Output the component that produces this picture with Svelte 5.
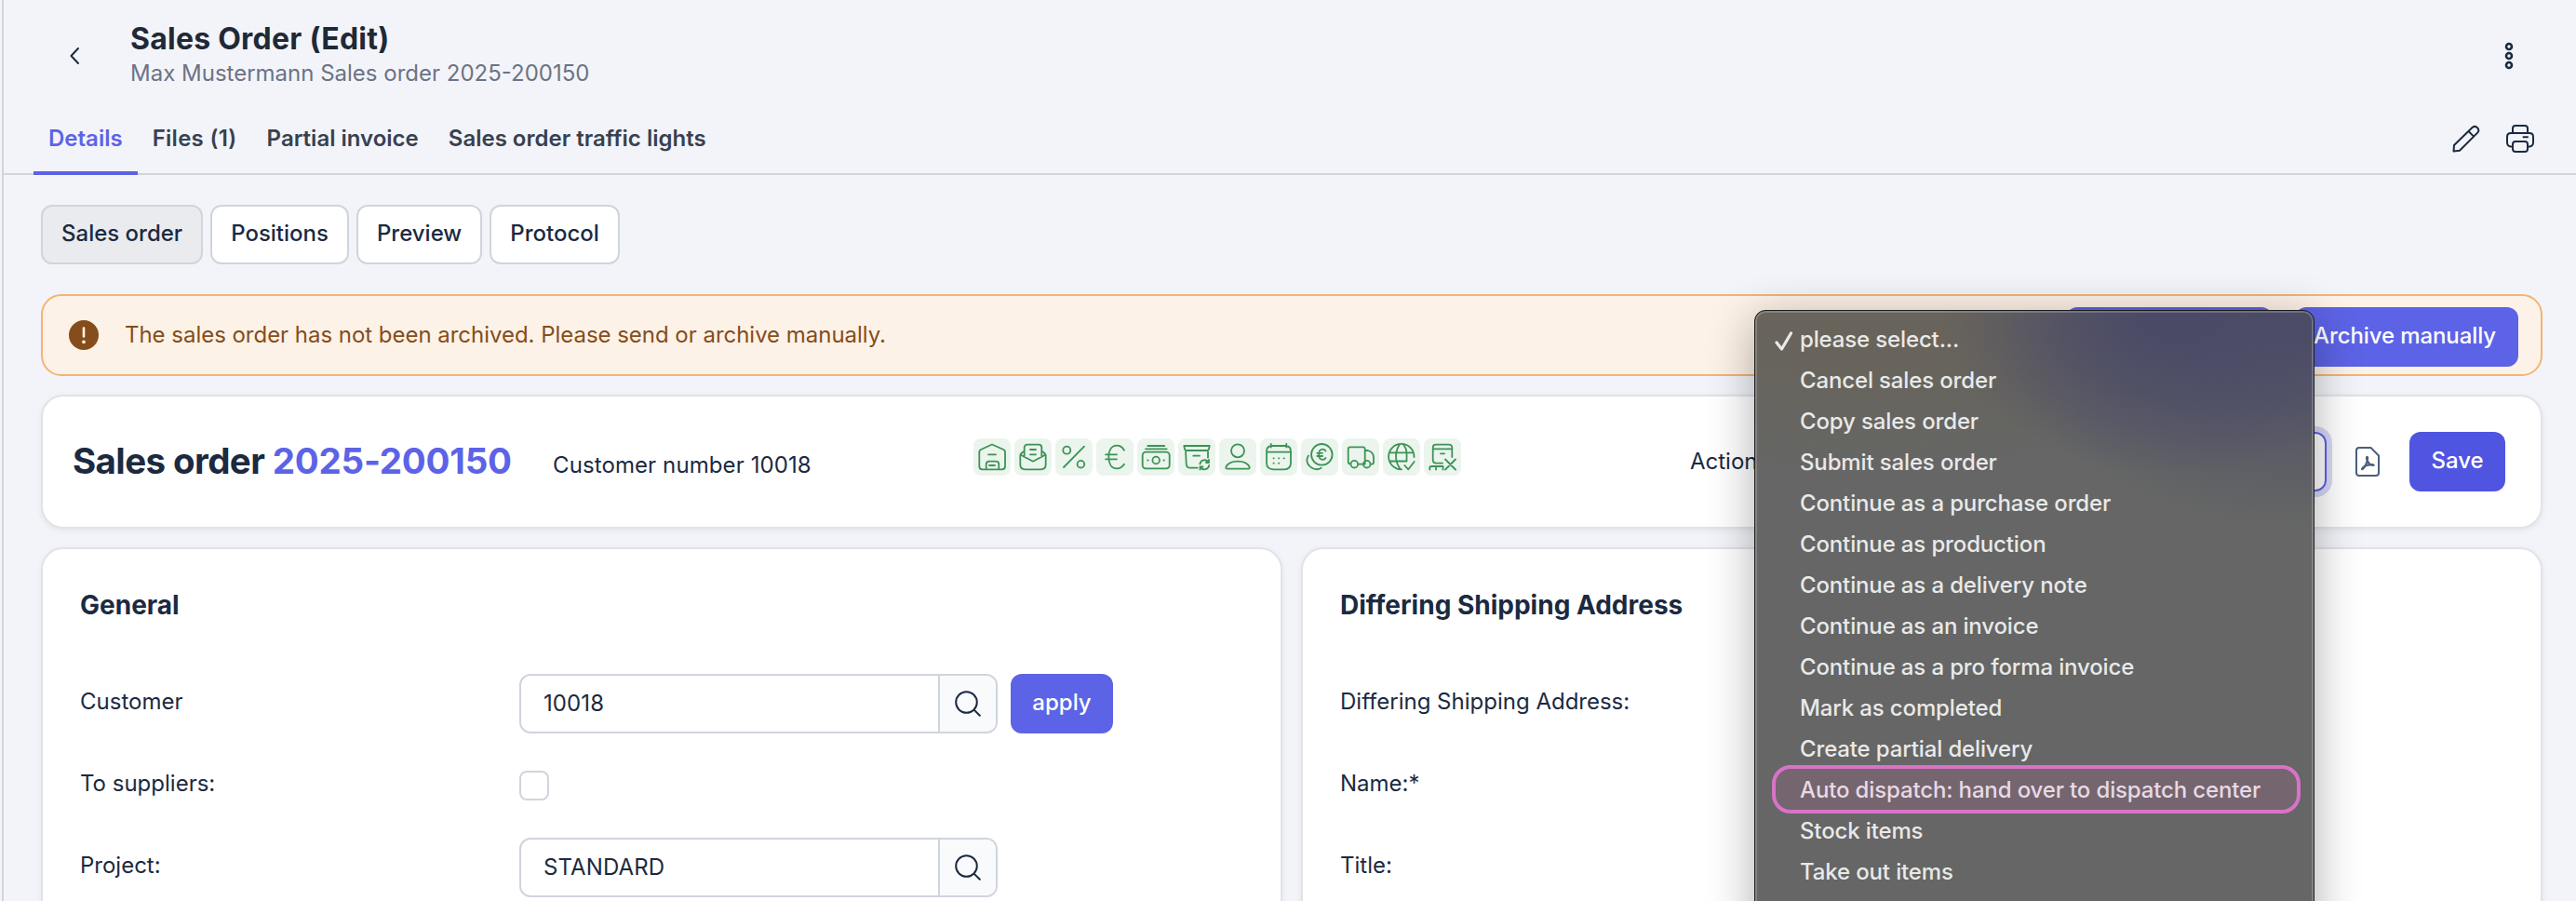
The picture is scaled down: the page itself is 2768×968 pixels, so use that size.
<script lang="ts">
  const tabs = ["Details", "Files (1)", "Partial invoice", "Sales order traffic lights"];
  const views = ["Sales order", "Positions", "Preview", "Protocol"];
  const actions = [
    "please select...",
    "Cancel sales order",
    "Copy sales order",
    "Submit sales order",
    "Continue as a purchase order",
    "Continue as production",
    "Continue as a delivery note",
    "Continue as an invoice",
    "Continue as a pro forma invoice",
    "Mark as completed",
    "Create partial delivery",
    "Auto dispatch: hand over to dispatch center",
    "Stock items",
    "Take out items",
  ];

  // status icons, drawn on a 40x40 grid
  const statusIcons = [
    // warehouse
    "M20 6.5 8 12q-1.7 .8-1.7 2.500V30q0 3.300 3.300 3.300H30.700q3.300 0 3.300-3.300V14.500q0-1.700-1.700-2.500ZM16 17.300h8M13.700 33V28q0-3.300 3.300-3.300h7q3.300 0 3.300 3.300v5M17 29h6",
    // open letter
    "M10.700 20V10q0-3.300 3.300-3.300H26q3.300 0 3.300 3.300V20M10.700 13.500 7.500 16q-1.200 1-1.200 2.500V28q0 5.300 5.300 5.300H28.400q5.300 0 5.300-5.300V18.500q0-1.500-1.200-2.500L29.300 13.500M6.500 17.500 20 24.700l13.500-7.200M17 12h6M17 17.300h6",
    // percent
    "M31 8.700 9 31M16.300 12.700a4 4 0 1 1-8 0 4 4 0 0 1 8 0ZM31.200 27.700a3.800 3.800 0 1 1-7.600 0 3.800 3.800 0 0 1 7.600 0Z",
    // euro
    "M30 12.700Q27 7.700 22 7.700c-5.500 0-8.700 5-8.700 12.300s3.200 12.300 8.700 12.300q5 0 8-4.600M10 17.300h12M10 22.300h12",
    // cash
    "M11.300 8h18M9 11.300h22.700M9.200 14.700h22a3.500 3.500 0 0 1 3.500 3.500v10.600a3.500 3.500 0 0 1-3.500 3.500H9.200a3.500 3.500 0 0 1-3.500-3.500V18.200a3.500 3.500 0 0 1 3.500-3.500ZM24 23.500a3.800 3.800 0 1 1-7.600 0 3.800 3.800 0 0 1 7.600 0ZM11.300 23.500h.4M28.500 23.500h.4",
    // archive
    "M6.300 8H33.700L33 11.500Q32.700 13 31 13H9Q7.300 13 7 11.500ZM8 13l.7 14.500q.3 4.200 4.300 4.200h7.700M32 13V20.700M16.300 18.700H23M23.400 27.500a5 5 0 0 1 9.300-1.700M33.200 29a5 5 0 0 1-9.300 1.800M33 23v3h-3M23.500 33.500v-3h3",
    // person
    "M27 13.300a7 7 0 1 1-14 0 7 7 0 0 1 14 0ZM7.300 31q2.700-6.300 12.700-6.300T32.700 31q.3 1.700-1.400 1.700H8.700Q7 32.700 7.300 31Z",
    // calendar
    "M12 8H28q5 .5 5 6V26q0 7.300-7.300 7.300H14.300Q7 33.300 7 26V14q0-5.500 5-6ZM7 14.700H33M11.700 6v3.500M28.300 6v3.500M14.500 21.300h.3M20 21.300h.3M25.600 21.300h.3M14.500 26.700h.3M20 26.700h.3",
    // coins
    "M33.600 17.300a11.300 11.300 0 1 1-22.600 0 11.300 11.300 0 0 1 22.600 0ZM26.500 13.500q-1.200-1.800-3.200-1.800c-3 0-4.200 2.500-4.200 5.600s1.200 5.600 4.200 5.600q2 0 3.200-1.800M17.300 15.800H23M17.300 19H23M8 18.500a10 10 0 0 0-1.700 4.500c0 7 8.500 13 15.400 8.700",
    // truck
    "M9.500 27.700Q6.700 27.700 6.700 25V11.300q0-2 2-2h14q2 0 2 2V27.700M17 27.700h6M24.700 13H28q6 1.500 6 8v4.500q0 2.200-2.200 2.200h-1.300M17.100 27.700a3.800 3.800 0 1 1-7.600 0 3.800 3.800 0 0 1 7.600 0ZM30.500 27.700a3.800 3.800 0 1 1-7.600 0 3.800 3.800 0 0 1 7.600 0Z",
    // globe with check
    "M33.500 20A13.700 13.700 0 1 0 20 33.300M8 15.300H32M7.500 24.500H25.500V15.300M18 6.500c-5.500 8-5.500 18.500 1 26.800M22 6.500q3.500 4.500 3.500 9M23.300 29l4 4.300L33.700 25",
    // package with cross
    "M30.300 20V10q0-3.300-3.300-3.300H13Q9.700 6.700 9.700 10V23q0 3.700 3.700 3.700H20M9.700 11.300H30.300M18 16.300h4M6.300 33.500V31.500q0-1.500 2-1.500H20.500v3.500M13 30v3.500M23 22.500l11 11M34 22.500l-11 11",
  ];
</script>

{#snippet searchField(value: string)}
  <div class="field">
    <span class="field-value">{value}</span>
    <span class="field-addon">
      <svg width="28" height="28" viewBox="0 0 28 28">
        <circle cx="12.500" cy="12.500" r="11.300" />
        <path d="m20.600 20.600 6.200 6.200" />
      </svg>
    </span>
  </div>
{/snippet}

<div class="page">
  <header class="header">
    <svg class="back" width="12" height="20" viewBox="0 0 12 20"><path d="M10 2 2.500 10 10 18" /></svg>
    <div class="heading">
      <h1>Sales Order (Edit)</h1>
      <p>Max Mustermann Sales order 2025-200150</p>
    </div>
    <svg class="more" width="10" height="30" viewBox="0 0 10 30">
      <circle cx="5" cy="5" r="3" />
      <circle cx="5" cy="15" r="3" />
      <circle cx="5" cy="25" r="3" />
    </svg>
  </header>

  <nav class="tabs">
    {#each tabs as tab, i}
      <a href="#{i}" class="tab" class:active={i === 0}>{tab}</a>
    {/each}
    <div class="tools">
      <svg width="30" height="30" viewBox="0 0 30 30">
        <path d="M1.500 28.500 2 22 21.800 2.800a4 4 0 0 1 5.600 5.600L8 27.700ZM17.500 7l5.600 5.600" />
      </svg>
      <svg width="30" height="30" viewBox="0 0 30 30">
        <path d="M7 9V4q0-3 3-3H20q3 0 3 3V9M7 23.500H5q-4-.5-4-4.500V13q0-4 4-4H25q4 0 4 4v6q0 4-4 4.500H23M18.500 13.300H23" />
        <rect x="7" y="18" width="16" height="11" rx="3" />
      </svg>
    </div>
  </nav>

  <main>
    <div class="views">
      {#each views as view, i}
        <button class="view" class:current={i === 0}>{view}</button>
      {/each}
    </div>

    <div class="alert">
      <svg width="32" height="32" viewBox="0 0 32 32">
        <circle cx="16" cy="16" r="16" fill="#854d1b" />
        <path d="M16 8.500v9" stroke="#fdf2e7" stroke-width="2.600" stroke-linecap="round" />
        <circle cx="16" cy="23.300" r="1.900" fill="#fdf2e7" />
      </svg>
      <span class="alert-text">The sales order has not been archived. Please send or archive manually.</span>
      <button class="primary send" aria-label="Send"></button>
      <button class="primary archive">Archive manually</button>
    </div>

    <section class="card summary">
      <h2>Sales order <span>2025-200150</span></h2>
      <span class="customer-number">Customer number 10018</span>
      <div class="statuses">
        {#each statusIcons as d}
          <svg class="status" viewBox="0 0 40 40"><path {d} /></svg>
        {/each}
      </div>
      <span class="action-label">Action</span>
      <div class="select"></div>
      <svg class="pdf" width="28" height="34" viewBox="0 0 28 34">
        <path d="M5 2H17.500L26 10.500V29q0 3-3 3H5q-3 0-3-3V5q0-3 3-3Z" />
        <path class="pdf-mark" d="M13.300 12q-.8 1.500 .7 4.500 2 4 5.500 4.500 1.500 0 1-.5-1-.8-6 .3T8.500 24q-1 1.500 0 1 2-1 4-5.500T14 12.500q-.3-.8-.7-.5Z" />
      </svg>
      <button class="primary save">Save</button>
    </section>

    <div class="columns">
      <section class="card form">
        <h3>General</h3>
        <div class="row">
          <span class="label">Customer</span>
          {@render searchField("10018")}
          <button class="primary apply">apply</button>
        </div>
        <div class="row">
          <span class="label">To suppliers:</span>
          <span class="checkbox"></span>
        </div>
        <div class="row">
          <span class="label">Project:</span>
          {@render searchField("STANDARD")}
        </div>
      </section>
      <section class="card form">
        <h3>Differing Shipping Address</h3>
        <div class="row"><span class="label">Differing Shipping Address:</span></div>
        <div class="row"><span class="label">Name:*</span></div>
        <div class="row"><span class="label">Title:</span></div>
      </section>
    </div>
  </main>

  <ul class="menu">
    {#each actions as action, i}
      <li class:highlight={action.startsWith("Auto dispatch")}>
        <span class="check">
          {#if i === 0}
            <svg width="20" height="22" viewBox="0 0 20 22"><path d="m2 13 5.500 7L17.500 3" /></svg>
          {/if}
        </span>
        {action}
      </li>
    {/each}
  </ul>
</div>

<style>
  :global(body) {
    background: #f3f4f9;
  }

  .page {
    position: relative;
    box-sizing: border-box;
    height: 968px;
    overflow: hidden;
    margin-left: 2px;
    border-left: 2px solid #d0d4dc;
    background: #f3f4f9;
    color: #1b2a41;
    font-family: Inter, "Liberation Sans", sans-serif;
    font-size: 24px;
    line-height: 36px;
  }

  .page * {
    box-sizing: border-box;
  }

  svg {
    flex: none;
    fill: none;
    stroke: #1b2a41;
    stroke-width: 2;
    stroke-linecap: round;
    stroke-linejoin: round;
  }

  h1,
  h2,
  h3,
  p {
    margin: 0;
    white-space: nowrap;
  }

  .header {
    display: flex;
    align-items: center;
    height: 120px;
    padding: 0 67px 0 70px;
  }

  .back {
    margin-right: 54px;
  }

  .heading {
    flex: 1;
    margin-top: -3px;
  }

  h1 {
    color: #1f2937;
    font-size: 32px;
    font-weight: 700;
    letter-spacing: 0.24px;
    line-height: 40px;
  }

  .heading p {
    color: #6b7386;
    line-height: 34px;
  }

  .more {
    stroke-width: 2.6;
  }

  .tabs {
    display: flex;
    height: 68px;
    padding-left: 32px;
    border-bottom: 2px solid #d0d4dc;
  }

  .tab {
    height: 68px;
    padding: 0 16px;
    color: #374151;
    font-weight: 600;
    line-height: 58px;
    text-decoration: none;
    white-space: nowrap;
  }

  .tab:nth-child(2) {
    letter-spacing: 0.28px;
  }

  .tab.active {
    border-bottom: 4px solid #5d63e6;
    color: #5d63e6;
  }

  .tools {
    display: flex;
    gap: 28px;
    height: 58px;
    align-items: center;
    margin-left: auto;
    padding-right: 45px;
  }

  main {
    display: flex;
    flex-direction: column;
    padding: 32px 36px 0 40px;
  }

  button {
    height: 64px;
    margin: 0;
    border: 0;
    border-radius: 12px;
    font: inherit;
    font-weight: 500;
    white-space: nowrap;
  }

  .views {
    display: flex;
    gap: 8px;
    margin-bottom: 32px;
  }

  .view {
    padding: 0 20px 2px;
    border: 2px solid #d0d4dc;
    background: #fff;
    color: #1b2a41;
  }

  .view.current {
    background: #eaebef;
  }

  .primary {
    padding: 0 20px 2px;
    background: #5d63e6;
    color: #fff;
  }

  .alert {
    display: flex;
    align-items: center;
    height: 88px;
    margin-bottom: 20px;
    padding: 0 24px 0 28px;
    border: 2px solid #f3b473;
    border-radius: 22px;
    background: #fdf2e7;
    color: #854d1b;
  }

  .alert svg {
    stroke: none;
  }

  .alert-text {
    flex: 1;
    margin: -1px 0 0 28px;
    letter-spacing: -0.03px;
  }

  .send {
    width: 222px;
    margin: 4px 24px 0 0;
  }

  .archive {
    width: 240px;
    margin-top: 4px;
    padding: 0 22px 2px 18px;
    letter-spacing: -0.1px;
  }

  .card {
    border: 2px solid #e1e3e7;
    border-radius: 24px;
    background: #fff;
    box-shadow: 0 2px 6px rgba(30, 40, 60, 0.07);
  }

  .summary {
    display: flex;
    align-items: center;
    height: 144px;
    margin-bottom: 20px;
    padding: 0 38px 0 32px;
  }

  h2 {
    width: 516px;
    margin-top: -2px;
    font-size: 38.5px;
    font-weight: 700;
    letter-spacing: -0.6px;
    line-height: 48px;
  }

  h2 span {
    color: #5d63e6;
    letter-spacing: -0.24px;
  }

  .customer-number {
    width: 452px;
    margin-top: 8px;
    letter-spacing: 0.1px;
    white-space: nowrap;
  }

  .statuses {
    display: flex;
    gap: 4px;
    margin-top: -10px;
  }

  .status {
    width: 40px;
    height: 40px;
    border-radius: 8px;
    background: #ebf4ed;
    stroke: #3b9455;
    stroke-width: 1.8;
  }

  .action-label {
    margin-left: 246px;
  }

  .select {
    flex: 1;
    height: 64px;
    margin: 0 30px 0 16px;
    border: 2px solid #5d63e6;
    border-radius: 12px;
    box-shadow: 0 0 0 6px #d7d8f5;
  }

  .pdf {
    margin-right: 31px;
    stroke: #4b5f7c;
  }

  .pdf-mark {
    stroke-width: 2.2;
  }

  .save {
    width: 103px;
    background: #4f55e0;
  }

  .columns {
    display: grid;
    grid-template-columns: 1fr 1fr;
    gap: 20px;
  }

  .form {
    height: 420px;
    padding: 40px 40px 0;
  }

  h3 {
    margin-bottom: 54px;
    font-size: 28px;
    font-weight: 700;
    line-height: 40px;
  }

  .row {
    display: flex;
    align-items: center;
    height: 64px;
    margin-bottom: 24px;
  }

  .label {
    width: 472px;
    margin-top: -5px;
  }

  .field {
    display: flex;
    width: 514px;
    height: 64px;
    overflow: hidden;
    border: 2px solid #d0d4dc;
    border-radius: 12px;
  }

  .field-value {
    flex: 1;
    padding-left: 24px;
    letter-spacing: 0.1px;
    line-height: 59px;
  }

  .field-addon {
    display: flex;
    align-items: center;
    justify-content: center;
    width: 62px;
    border-left: 2px solid #d0d4dc;
    background: #f9fafc;
  }

  .apply {
    width: 110px;
    margin-left: 14px;
  }

  .checkbox {
    width: 32px;
    height: 32px;
    border: 2px solid #d0d4dc;
    border-radius: 8px;
  }

  .menu {
    position: absolute;
    top: 333px;
    left: 1881px;
    width: 602px;
    height: 680px;
    margin: 0;
    padding: 9px 14px 0 18px;
    border: 1px solid #1c1c1e;
    border-radius: 12px;
    background:
      radial-gradient(ellipse 250px 170px at 450px 5px, #4a4a67 10%, rgba(74, 74, 103, 0) 100%),
      radial-gradient(ellipse 320px 230px at 580px 0, rgba(74, 74, 103, 0.9) 10%, rgba(74, 74, 103, 0) 100%),
      radial-gradient(ellipse 420px 170px at 120px 0, #68645b 30%, rgba(104, 100, 91, 0) 100%),
      #656665;
    box-shadow:
      inset 0 0 0 2px rgba(255, 255, 255, 0.2),
      0 10px 50px rgba(0, 0, 0, 0.32);
    color: #e9e9e9;
    font-weight: 500;
    letter-spacing: -0.14px;
    list-style: none;
  }

  .menu li {
    display: flex;
    align-items: center;
    height: 44px;
    white-space: nowrap;
  }

  .menu .highlight {
    height: 52px;
    margin: -5px 0 -3px;
    padding-top: 1px;
    border: 4px solid #d873c8;
    border-radius: 20px;
    background: #74656f;
    color: #e8d9e5;
  }

  .check {
    width: 30px;
  }

  .highlight .check {
    width: 26px;
  }

  .check svg {
    display: block;
    margin: 2px 0 0 3px;
    stroke: #e9e9e9;
    stroke-width: 3.2;
  }
</style>
